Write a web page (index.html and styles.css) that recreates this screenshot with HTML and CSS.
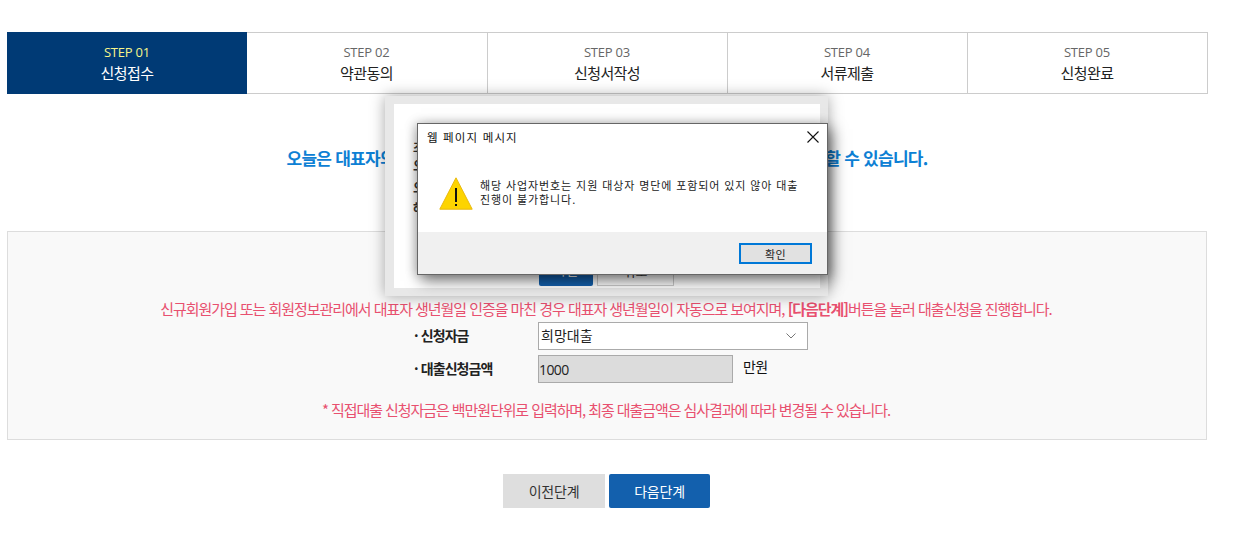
FILE: index.html
```html
<!DOCTYPE html>
<html lang="ko">
<head>
<meta charset="utf-8">
<title>신청접수</title>
<link rel="stylesheet" href="styles.css">
</head>
<body>
<main class="page">
  <ol class="steps">
    <li class="step active"><span class="step-no">STEP 01</span><span class="step-name">신청접수</span></li>
    <li class="step"><span class="step-no">STEP 02</span><span class="step-name">약관동의</span></li>
    <li class="step"><span class="step-no">STEP 03</span><span class="step-name">신청서작성</span></li>
    <li class="step"><span class="step-no">STEP 04</span><span class="step-name">서류제출</span></li>
    <li class="step"><span class="step-no">STEP 05</span><span class="step-name">신청완료</span></li>
  </ol>
  <h2 class="notice">오늘은 대표자의 생년월일 끝자리에 해당하는 기업만 온라인으로 대출신청을 진행할 수 있습니다.</h2>
  <section class="panel">
    <p class="info">신규회원가입 또는 회원정보관리에서 대표자 생년월일 인증을 마친 경우 대표자 생년월일이 자동으로 보여지며, <b>[다음단계]</b>버튼을 눌러 대출신청을 진행합니다.</p>
    <div class="row row-select">
      <span class="label">· 신청자금</span>
      <div class="select">희망대출
        <svg class="chev" width="10" height="6" viewBox="0 0 10 6"><path d="M0.5 0.5 5 5 9.5 0.5" fill="none" stroke="#777" stroke-width="1"/></svg>
      </div>
    </div>
    <div class="row row-amount">
      <span class="label">· 대출신청금액</span>
      <div class="amount">1000</div>
      <span class="unit">만원</span>
    </div>
    <p class="info note">* 직접대출 신청자금은 백만원단위로 입력하며, 최종 대출금액은 심사결과에 따라 변경될 수 있습니다.</p>
  </section>
  <div class="actions">
    <button class="btn btn-prev">이전단계</button>
    <button class="btn btn-next">다음단계</button>
  </div>
</main>

<div class="layer">
  <div class="layer-inner">
    <p class="layer-line l1">조</p>
    <p class="layer-line l2">오</p>
    <p class="layer-line l3">오</p>
    <p class="layer-line l4">해</p>
    <div class="layer-btns"><span class="lb lb-ok">확인</span><span class="lb lb-no">취소</span></div>
  </div>
</div>

<div class="dialog">
  <div class="dialog-title">
    <span>웹 페이지 메시지</span>
    <svg width="12" height="12" viewBox="0 0 12 12"><path d="M0.5 0.5 11.5 11.5M11.5 0.5 0.5 11.5" stroke="#111" stroke-width="1.1" fill="none"/></svg>
  </div>
  <div class="dialog-body">
    <svg class="warn" width="34" height="33" viewBox="0 0 34 33">
      <path d="M17 0.8 33.2 32.2H0.8Z" fill="#fdd400" stroke="#e9b90e" stroke-width="1"/>
      <rect x="16" y="11" width="2" height="14" fill="#111"/>
      <rect x="16" y="27" width="2" height="2" fill="#111"/>
    </svg>
    <p class="dialog-msg">해당 사업자번호는 지원 대상자 명단에 포함되어 있지 않아 대출<br>진행이 불가합니다.</p>
  </div>
  <div class="dialog-foot"><button class="dialog-ok">확인</button></div>
</div>
</body>
</html>
```
FILE: styles.css
```css
* { box-sizing: border-box; }
html, body { margin: 0; padding: 0; height: 100%; overflow: hidden; background: #fff; }
body { font-family: "Noto Sans CJK KR", "Noto Sans", sans-serif; color: #222; position: relative; }
p, h2, ol { margin: 0; padding: 0; }

.page { width: 1200px; margin-left: 7px; padding-top: 32px; }

.steps { display: flex; list-style: none; height: 62px; width: 1201px; }
.step { flex: none; width: 240px; display: flex; flex-direction: column; align-items: center; border: 1px solid #ccc; border-left: 0; padding: 10px 1px 0 0; }
.step:first-child { border: 0; padding: 11px 0 0 0; }
.step:nth-child(2) { width: 241px; }
.step-no { font-family: "Open Sans", "Liberation Sans", sans-serif; font-size: 13px; line-height: 19px; color: #666; letter-spacing: -0.2px; }
.step-name { font-size: 15px; line-height: 22px; color: #222; letter-spacing: -0.6px; }
.active { background: #003a75; }
.active .step-no { color: #f7f58a; }
.active .step-name { color: #fff; }

.notice { margin-top: 52px; height: 24px; text-align: center; font-size: 17px; line-height: 24px; font-weight: 700; color: #0d80d4; letter-spacing: -0.74px; white-space: nowrap; }

.panel { margin-top: 61px; height: 209px; background: #f9f9f9; border: 1px solid #ddd; padding-top: 66px; }
.info { text-align: center; font-size: 15px; line-height: 21px; color: #e8506f; letter-spacing: -1.05px; padding-right: 2px; }
.info b { color: #e8506f; }
.row { display: flex; align-items: center; margin-left: 406px; }
.label { width: 124px; margin-top: -2px; font-size: 14px; font-weight: 700; color: #222; letter-spacing: -0.9px; }
.row-select { margin-top: 3px; }
.row-amount { margin-top: 5px; }
.select { width: 270px; height: 28px; background: #fff; border: 1px solid #aaa; font-size: 14px; line-height: 25px; padding: 0 11px 2px 2px; color: #222; letter-spacing: 0; display: flex; justify-content: space-between; align-items: center; }
.chev { margin-top: 2px; }
.amount { width: 195px; height: 28px; background: #dcdcdc; border: 1px solid #aaa; font-size: 14px; line-height: 28px; color: #222; font-family: "Open Sans", "Noto Sans", sans-serif; letter-spacing: -0.6px; }
.unit { margin-left: 10px; margin-top: -6px; font-size: 14px; color: #111; letter-spacing: -0.6px; }
.note { margin-top: 16px; letter-spacing: -1.08px; }

.actions { display: flex; justify-content: center; gap: 4px; margin-top: 34px; padding-right: 1px; }
.btn { width: 102px; height: 34px; border: 0; font-family: inherit; font-size: 14px; letter-spacing: -0.2px; padding: 0; }
.btn-prev { background: #dedede; color: #333; }
.btn-next { width: 101px; background: #1360ad; color: #fff; border-radius: 2px; }

.layer { position: absolute; left: 385px; top: 96px; width: 443px; height: 200px; border: 8px solid #e8e8e8; border-left-width: 9px; background: #fff; box-shadow: 0 0 14px rgba(0,0,0,.35); }
.layer-inner { position: relative; height: 100%; }
.layer-line { position: absolute; left: 19px; font-size: 13px; line-height: 16px; font-weight: 700; color: #333; }
.l1 { top: 35px; font-size: 11px; } .l2 { top: 53px; } .l3 { top: 75px; } .l4 { top: 96px; }
.layer-btns { position: absolute; left: 145px; top: 160px; display: flex; gap: 4px; }
.lb { display: block; height: 22px; font-size: 13px; line-height: 12px; text-align: center; }
.lb-ok { width: 54px; background: #1360ad; color: #fff; border-radius: 2px; }
.lb-no { width: 77px; background: #fff; border: 1px solid #ccc; color: #333; }

.dialog { position: absolute; left: 417px; top: 123px; width: 411px; height: 152px; background: #fff; border: 1px solid #666; box-shadow: 4px 6px 14px rgba(0,0,0,.5), -2px 0 10px rgba(0,0,0,.2); display: flex; flex-direction: column; }
.dialog-title { height: 29px; display: flex; justify-content: space-between; align-items: center; padding: 0 8px 3px 9px; font-size: 11.5px; letter-spacing: 1.15px; color: #111; flex: none; }
.dialog-body { flex: 1; display: flex; align-items: flex-start; padding: 25px 0 0 21px; }
.warn { flex: none; margin-right: 7px; margin-top: -1px; }
.dialog-msg { font-size: 11px; line-height: 14px; color: #222; letter-spacing: 0.9px; white-space: nowrap; }
.dialog-foot { height: 42px; background: #f0f0f0; display: flex; justify-content: flex-end; padding: 11px 15px 0 0; flex: none; }
.dialog-ok { width: 73px; height: 21px; background: #e1e1e1; border: 2px solid #0078d7; font-family: inherit; font-size: 11px; color: #222; padding: 0; letter-spacing: 0.4px; }
```
